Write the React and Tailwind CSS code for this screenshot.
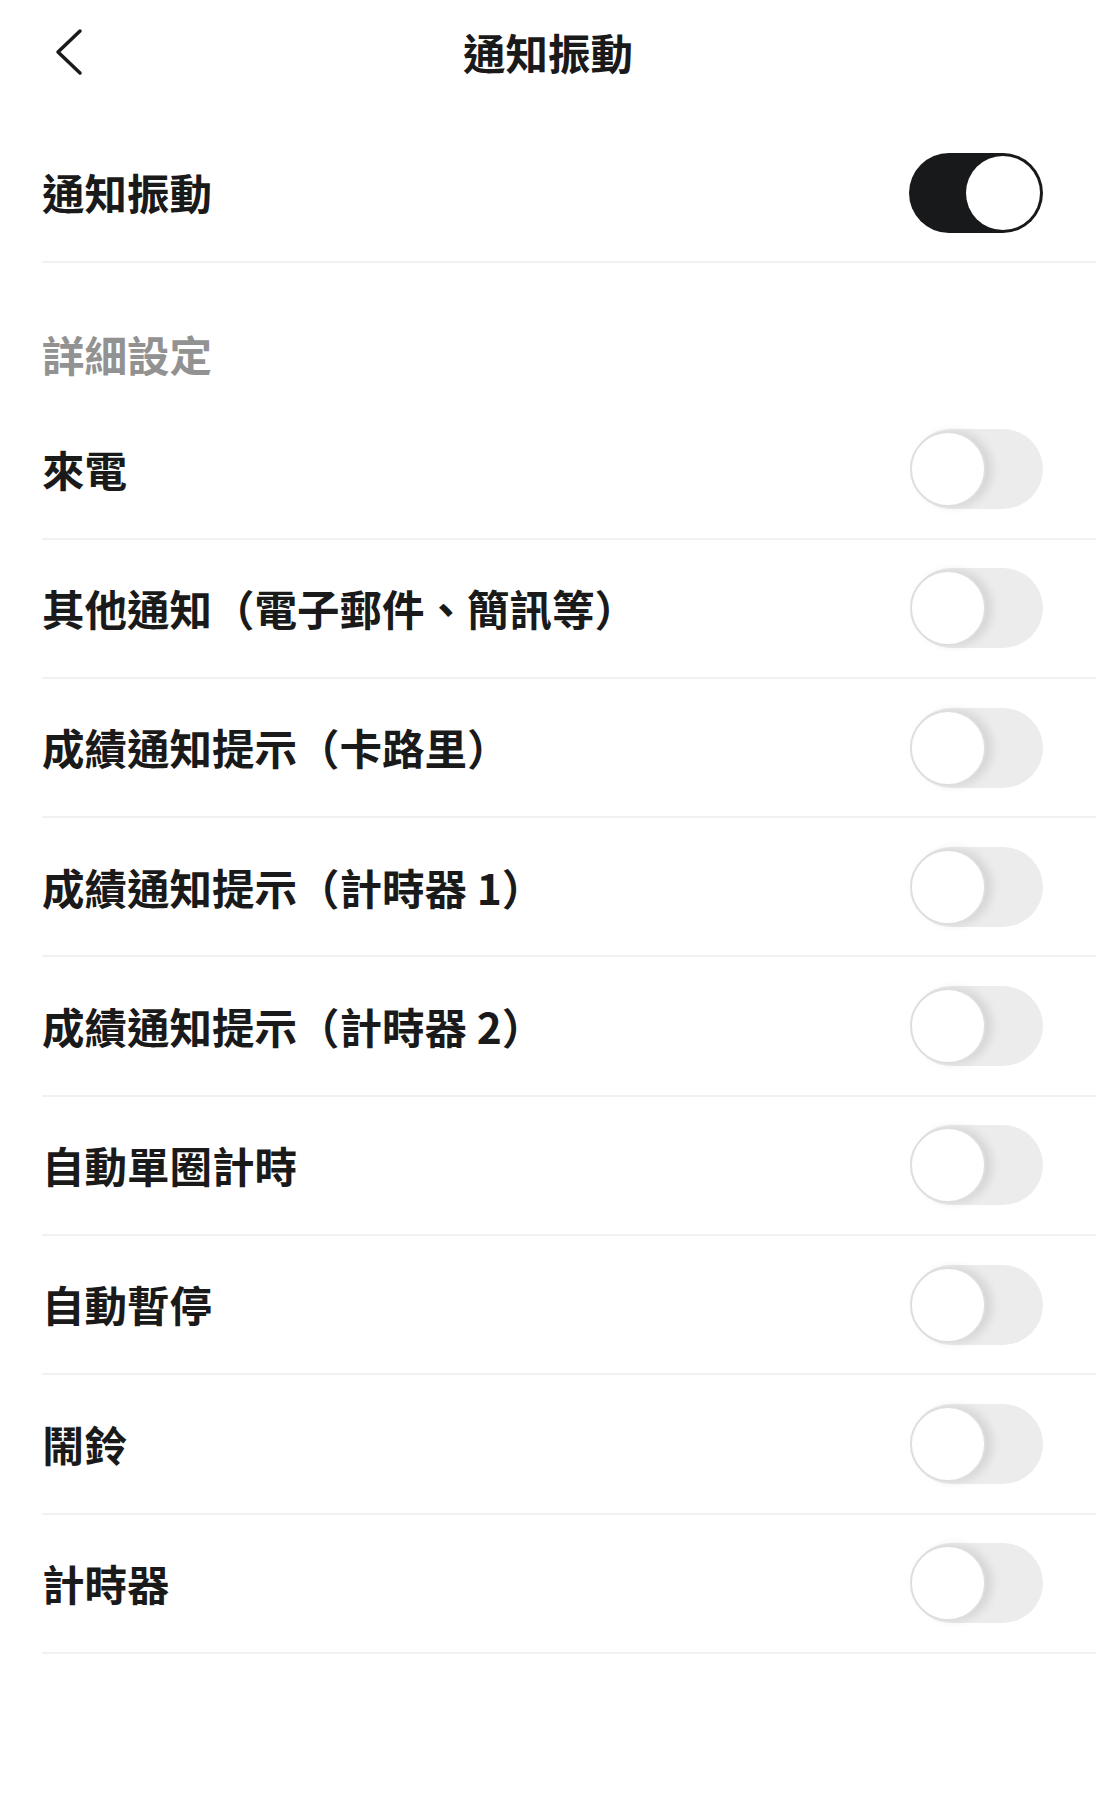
import React, { useState } from "react"

const rows = [
  "來電",
  "其他通知（電子郵件、簡訊等）",
  "成績通知提示（卡路里）",
  "成績通知提示（計時器 1）",
  "成績通知提示（計時器 2）",
  "自動單圈計時",
  "自動暫停",
  "鬧鈴",
  "計時器",
]

// =========================
// TOGGLE
// =========================
function Toggle({ on, onClick }) {

  if (on) {
    return (
      <button
        onClick={onClick}
        className="w-[134px] h-[80px] rounded-full bg-[#18191b] flex items-center justify-end px-[3px] shrink-0"
      >
        <span className="w-[74px] h-[74px] rounded-full bg-white" />
      </button>
    )
  }

  return (
    <button
      onClick={onClick}
      className="w-[132px] h-[80px] rounded-full bg-[#ececed] flex items-center justify-start shrink-0"
    >
      <span className="w-[76px] h-[76px] -ml-[1px] rounded-full bg-white border-2 border-[#dedede] shadow-[6px_0_10px_rgba(0,0,0,0.10)]" />
    </button>
  )

}

function Row({ label, on, onClick }) {
  return (
    <div className="ml-[42px] pr-[53px] h-[139.3px] flex items-center justify-between border-b-2 border-[#f1f1f1]">
      <span className="text-[42.5px] leading-none font-bold text-[#1a1a1a]">
        {label}
      </span>
      <Toggle on={on} onClick={onClick} />
    </div>
  )
}

export default function App() {

  const [master, setMaster] = useState(true)
  const [flags, setFlags] = useState(rows.map(() => false))

  const flip = (i) => {
    setFlags(flags.map((f, j) => (j === i ? !f : f)))
  }

  return (
    <div
      className="min-h-[1807px] w-full bg-white"
      style={{ fontFamily: '"Noto Sans CJK TC", "Noto Sans", sans-serif' }}
    >

      {/* HEADER */}
      <div className="h-[104px] grid grid-cols-[1fr_auto_1fr] items-center">
        <div className="pl-[53px] flex items-center">
          <svg width="34" height="50" viewBox="0 0 34 50" fill="none">
            <path
              d="M27 4 L5 25 L27 46"
              stroke="#1a1a1a"
              strokeWidth="3.5"
              strokeLinecap="round"
              strokeLinejoin="round"
            />
          </svg>
        </div>
        <h1 className="text-[42.5px] leading-none font-bold text-[#1a1a1a]">
          通知振動
        </h1>
        <div />
      </div>

      {/* MASTER */}
      <div className="mt-[20px]">
        <Row label="通知振動" on={master} onClick={() => setMaster(!master)} />
      </div>

      {/* SECTION */}
      <div className="pl-[42px] pt-[67px] pb-[22px]">
        <p className="text-[42.5px] leading-[48px] font-bold text-[#929292]">
          詳細設定
        </p>
      </div>

      <div>
        {rows.map((r, i) => (
          <Row key={r} label={r} on={flags[i]} onClick={() => flip(i)} />
        ))}
      </div>

    </div>
  )

}
